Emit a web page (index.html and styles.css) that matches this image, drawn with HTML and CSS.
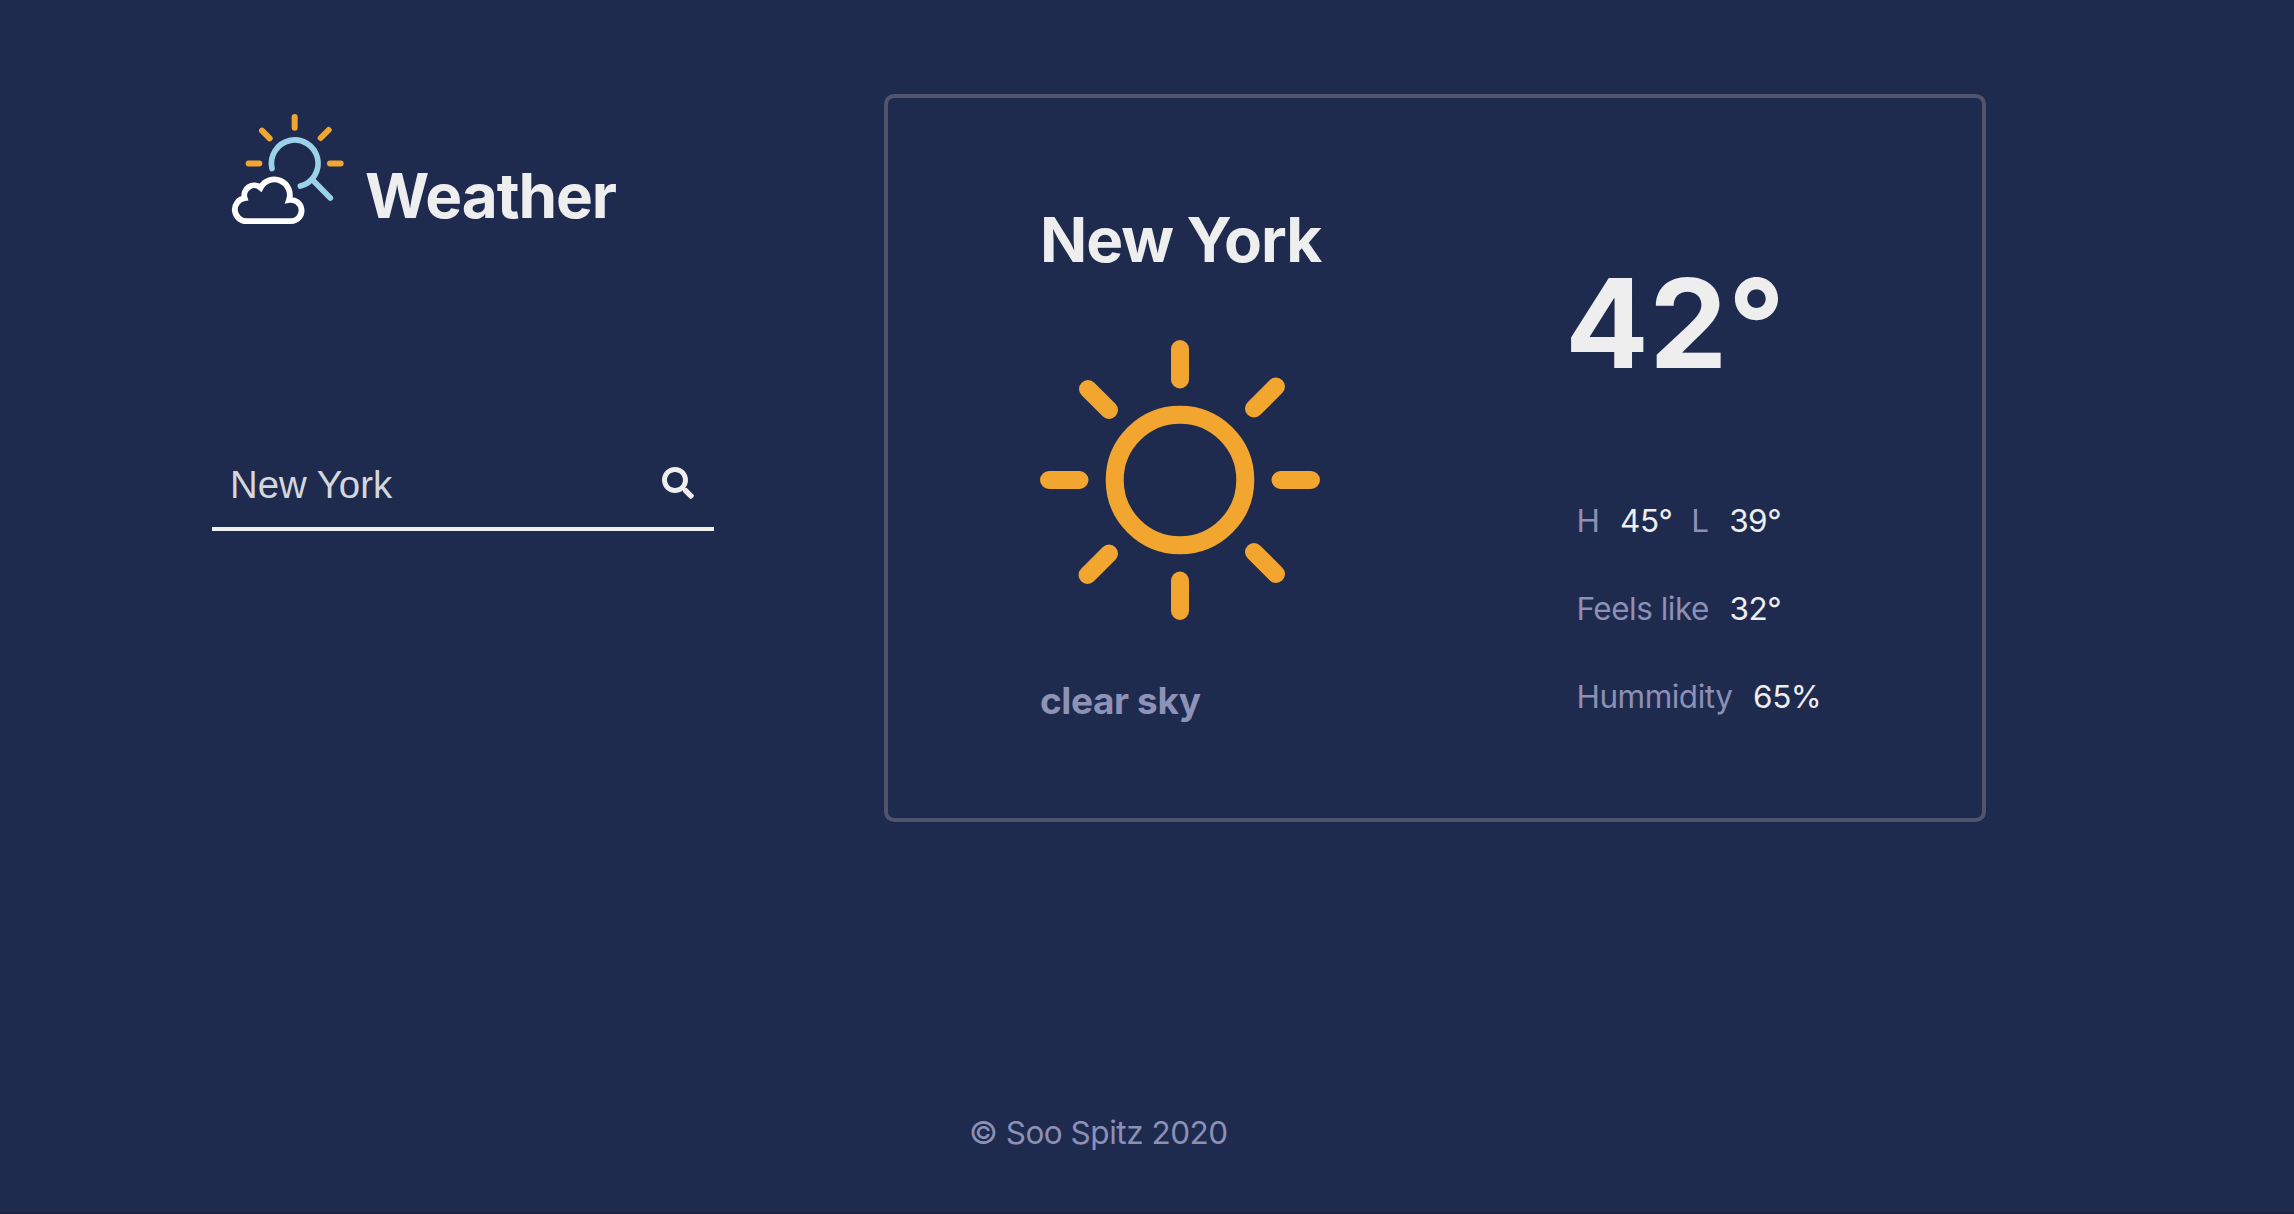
FILE: index.html
```
<!DOCTYPE html>
<html lang="en">
<head>
  <meta charset="utf-8">
  <title>Weather</title>
  <link rel="stylesheet" href="styles.css">
</head>
<body>
  <div class="page">
    <main class="main">
      <section class="sidebar">
        <header class="brand">
          <svg class="brand-logo" viewBox="0 0 420 390" fill="none" stroke-linecap="round">
            <path class="rays" stroke-width="18" d="M224 36v32M86 175.500h32M330 175.500h32M126 77l23 23M326 75l-24 24"/>
            <path class="lens" stroke-width="17" d="M156 190.500A70 70 0 1 1 241 243M278 225l53 54"/>
            <path class="cloud" stroke-width="17.500" stroke-linecap="butt" d="M80 348.500A34.700 34.700 0 0 1 74 279.500A30 30 0 0 1 122 248A46.500 46.500 0 0 1 207 285A32 32 0 1 1 213 348.500Z"/>
          </svg>
          <h1 class="brand-name">Weather</h1>
        </header>
        <form class="search">
          <span class="search-text">New York</span>
          <svg class="search-icon" viewBox="0 0 512 512">
            <path d="M505 442.700L405.300 343c-4.500-4.500-10.600-7-17-7H372c27.600-35.300 44-79.700 44-128C416 93.100 322.900 0 208 0S0 93.100 0 208s93.100 208 208 208c48.300 0 92.700-16.400 128-44v16.300c0 6.400 2.500 12.500 7 17l99.700 99.700c9.400 9.400 24.600 9.400 33.900 0l28.300-28.300c9.400-9.400 9.400-24.600.1-34zM208 336c-70.700 0-128-57.200-128-128 0-70.700 57.200-128 128-128 70.700 0 128 57.200 128 128 0 70.700-57.200 128-128 128z"/>
          </svg>
        </form>
      </section>
      <section class="card">
        <div class="overview">
          <h2 class="city">New York</h2>
          <svg class="sun" viewBox="0 0 280 280" fill="none" stroke-width="18" stroke-linecap="round">
            <circle cx="140" cy="140" r="65.300"/>
            <path d="M140 9v30.500M140 240.500V271M9 140h30.500M240.500 140H271M48 49l21 21M236 46.500l-22 22M47.500 235l21.500-21.500M214 212l22 22"/>
          </svg>
          <p class="conditions">clear sky</p>
        </div>
        <div class="details">
          <p class="temperature">42°</p>
          <dl class="stats">
            <div class="stat"><dt>H</dt><dd>45°</dd><dt>L</dt><dd>39°</dd></div>
            <div class="stat"><dt>Feels like</dt><dd>32°</dd></div>
            <div class="stat"><dt>Hummidity</dt><dd>65%</dd></div>
          </dl>
        </div>
      </section>
    </main>
    <footer class="footer">© Soo Spitz 2020</footer>
  </div>
</body>
</html>
```

FILE: styles.css
```
* {
  box-sizing: border-box;
  margin: 0;
  padding: 0;
}

body {
  background: #1f2a4f;
  color: #eee;
  font-family: Inter, "Noto Sans", sans-serif;
}

.page {
  display: flex;
  flex-direction: column;
  height: 1214px;
  border-bottom: 2px solid #1b2345;
}

.main {
  display: grid;
  grid-template-columns: 502px 1102px;
  column-gap: 170px;
  padding: 94px 0 0 212px;
}

.brand {
  display: flex;
  align-items: flex-end;
  height: 130px;
  margin: 11px 0 0 8px;
}

.brand-logo {
  width: 140px;
  height: 130px;
}

.rays {
  stroke: #f2a62f;
}

.lens {
  stroke: #9ad2ea;
}

.cloud {
  stroke: #fff;
}

.brand-name {
  margin: 0 0 8px 5px;
  font-size: 62px;
  line-height: 62px;
  letter-spacing: -1.05px;
}

.search {
  display: flex;
  align-items: center;
  justify-content: space-between;
  height: 90px;
  margin-top: 206px;
  padding: 0 20px 0 18px;
  border-bottom: 4px solid #f0f0ec;
}

.search-text {
  padding-top: 2px;
  color: #d3d7dc;
  font: 38.4px/46px "Liberation Sans", Arial, sans-serif;
}

.search-icon {
  width: 32px;
  height: 32px;
  margin-top: -3px;
  fill: #eee;
}

.card {
  display: flex;
  height: 728px;
  padding-left: 152px;
  border: 4px solid #50546e;
  border-radius: 10px;
}

.overview {
  width: 525px;
  padding-top: 104px;
}

.city {
  font-size: 62px;
  line-height: 76px;
  letter-spacing: -1.05px;
}

.sun {
  display: block;
  width: 280px;
  height: 280px;
  margin-top: 62px;
  stroke: #f2a62f;
}

.conditions {
  margin-top: 59px;
  color: #8e92b6;
  font-size: 37px;
  font-weight: 700;
  line-height: 44px;
  letter-spacing: -0.4px;
}

.details {
  padding-top: 150px;
}

.temperature {
  font-size: 124px;
  font-weight: 700;
  line-height: 150px;
  letter-spacing: 0.5px;
}

.stats {
  margin: 79px 0 0 11.5px;
  font-size: 31.5px;
  line-height: 88px;
  letter-spacing: -0.5px;
}

.stat {
  display: flex;
  gap: 20.7px;
}

.stat dt {
  color: #8c90b4;
}

.stat dd + dt {
  margin-left: -2px;
}

.footer {
  margin-top: 291px;
  padding-left: 969px;
  color: #8c90b4;
  font-size: 31.5px;
  line-height: 40px;
  letter-spacing: -0.48px;
}
```
